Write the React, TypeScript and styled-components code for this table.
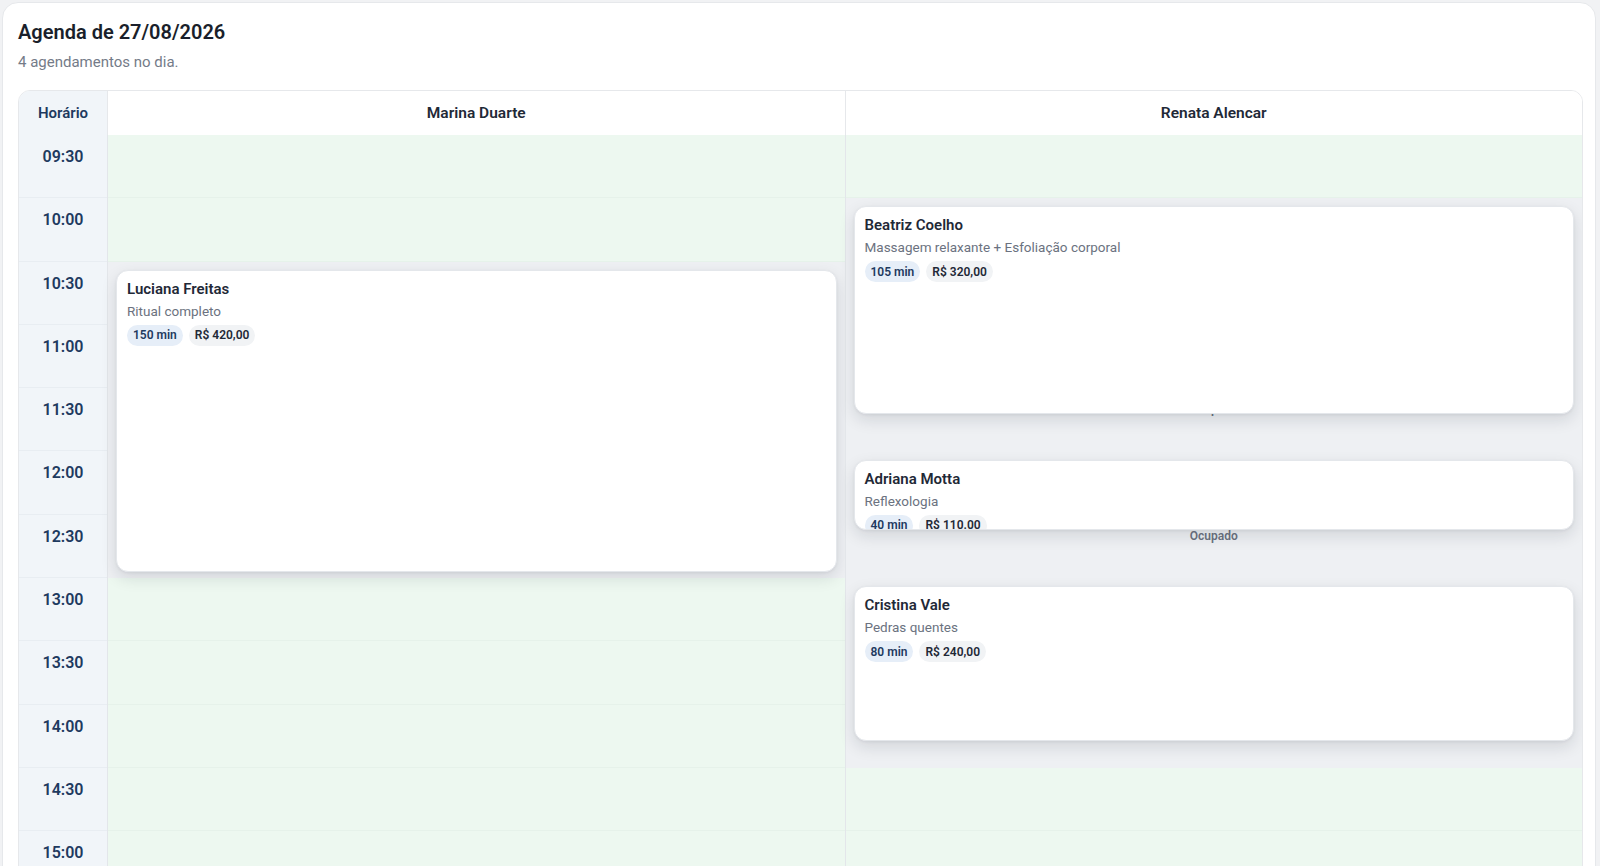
import React from "react";
import styled, { createGlobalStyle } from "styled-components";

const SLOT = 63.3;
const FONT = `Roboto, "Noto Sans", "Liberation Sans", sans-serif`;

const Global = createGlobalStyle`
  html, body { margin: 0; padding: 0; background: #f1f2f4; }
  body { font-family: ${FONT}; color: #1f2937; }
  * { box-sizing: border-box; }
`;

const Page = styled.div`
  padding: 2px 4px 0 2px;
`;

const Panel = styled.section`
  background: #ffffff;
  border: 1px solid #e6e8eb;
  border-radius: 16px;
  padding: 15px 12px 24px 15px;
`;

const Title = styled.h1`
  margin: 0;
  font-size: 20px;
  line-height: 28px;
  font-weight: 600;
  color: #1a1f2b;
  letter-spacing: 0;
`;

const Subtitle = styled.p`
  margin: 6px 0 0;
  font-size: 15px;
  line-height: 20px;
  color: #747b88;
`;

const Table = styled.div`
  margin-top: 18px;
  border: 1px solid #e6e8eb;
  border-radius: 12px;
  overflow: hidden;
  display: grid;
  grid-template-columns: 88px 1fr 1fr;
`;

const HeadCell = styled.div<{ $time?: boolean }>`
  height: 44px;
  display: flex;
  align-items: center;
  justify-content: center;
  font-size: ${(p) => (p.$time ? "15px" : "15.5px")};
  font-weight: 600;
  color: ${(p) => (p.$time ? "#1e3a5f" : "#1f2937")};
  background: ${(p) => (p.$time ? "#f1f5f9" : "#ffffff")};
  border-left: ${(p) => (p.$time ? "none" : "1px solid #e6e8eb")};
`;

const TimeColumn = styled.div`
  background: #f1f5f9;
  display: flex;
  flex-direction: column;
`;

const TimeCell = styled.div`
  height: ${SLOT}px;
  padding-top: 12px;
  text-align: center;
  font-size: 16px;
  line-height: 20px;
  font-weight: 600;
  color: #1e3a5f;
  border-bottom: 1px solid #e8edf2;
`;

const ResourceColumn = styled.div`
  position: relative;
  display: flex;
  flex-direction: column;
  border-left: 1px solid #e3e6ea;
`;

const Slot = styled.div<{ $busy?: boolean }>`
  height: ${SLOT}px;
  flex: none;
  background: ${(p) => (p.$busy ? "#eef0f3" : "#edf8f0")};
  border-bottom: 1px solid ${(p) => (p.$busy ? "#eef0f3" : "#e6f2ea")};
  display: flex;
  justify-content: center;
  padding-top: 14px;
`;

const BusyLabel = styled.span`
  font-size: 12px;
  line-height: 14px;
  font-weight: 600;
  color: #6b7280;
`;

const Appointment = styled.article`
  position: absolute;
  left: 8px;
  right: 8px;
  background: #ffffff;
  border: 1px solid #e4e7eb;
  border-radius: 12px;
  box-shadow: 0 6px 16px rgba(15, 23, 42, 0.12), 0 1px 3px rgba(15, 23, 42, 0.06);
  padding: 8px 10px;
  overflow: hidden;
  display: flex;
  flex-direction: column;
  align-items: flex-start;
`;

const ClientName = styled.div`
  font-size: 15px;
  line-height: 20px;
  font-weight: 600;
  color: #1f2937;
`;

const Service = styled.div`
  margin-top: 3px;
  font-size: 13.5px;
  line-height: 18px;
  color: #6b7280;
`;

const Chips = styled.div`
  margin-top: 5px;
  display: flex;
  gap: 6px;
`;

const Chip = styled.span<{ $tone: "blue" | "grey" }>`
  height: 21px;
  display: inline-flex;
  align-items: center;
  padding: 0 6px;
  border-radius: 999px;
  font-size: 12px;
  font-weight: 600;
  background: ${(p) => (p.$tone === "blue" ? "#e6eef8" : "#f1f3f5")};
  color: ${(p) => (p.$tone === "blue" ? "#1e3a5f" : "#1f2937")};
`;

const times = [
  "09:30", "10:00", "10:30", "11:00", "11:30", "12:00", "12:30",
  "13:00", "13:30", "14:00", "14:30", "15:00", "15:30", "16:00",
];

type Appt = {
  name: string;
  service: string;
  start: string;
  minutes: number;
  price: string;
};

type Resource = { name: string; appts: Appt[] };

const resources: Resource[] = [
  {
    name: "Marina Duarte",
    appts: [
      { name: "Luciana Freitas", service: "Ritual completo", start: "10:30", minutes: 150, price: "R$ 420,00" },
    ],
  },
  {
    name: "Renata Alencar",
    appts: [
      { name: "Beatriz Coelho", service: "Massagem relaxante + Esfoliação corporal", start: "10:00", minutes: 105, price: "R$ 320,00" },
      { name: "Adriana Motta", service: "Reflexologia", start: "12:00", minutes: 40, price: "R$ 110.00" },
      { name: "Cristina Vale", service: "Pedras quentes", start: "13:00", minutes: 80, price: "R$ 240,00" },
    ],
  },
];

const toMin = (t: string) => {
  const [h, m] = t.split(":").map(Number);
  return h * 60 + m;
};
const BASE = toMin("09:30");

function isBusy(r: Resource, t: string) {
  const s = toMin(t);
  return r.appts.some((a) => {
    const st = toMin(a.start);
    return s + 30 > st && s < st + a.minutes;
  });
}

export default function App() {
  return (
    <Page>
      <Global />
      <Panel>
        <Title>Agenda de 27/08/2026</Title>
        <Subtitle>4 agendamentos no dia.</Subtitle>
        <Table>
          <HeadCell $time>Horário</HeadCell>
          {resources.map((r) => (
            <HeadCell key={r.name}>{r.name}</HeadCell>
          ))}
          <TimeColumn>
            {times.map((t) => (
              <TimeCell key={t}>{t}</TimeCell>
            ))}
          </TimeColumn>
          {resources.map((r) => (
            <ResourceColumn key={r.name}>
              {times.map((t) => {
                const busy = isBusy(r, t);
                return (
                  <Slot key={t} $busy={busy}>
                    {busy && <BusyLabel>Ocupado</BusyLabel>}
                  </Slot>
                );
              })}
              {r.appts.map((a) => (
                <Appointment
                  key={a.name}
                  style={{
                    top: ((toMin(a.start) - BASE) / 30) * SLOT + 8,
                    height: (a.minutes / 30) * SLOT - 14,
                  }}
                >
                  <ClientName>{a.name}</ClientName>
                  <Service>{a.service}</Service>
                  <Chips>
                    <Chip $tone="blue">{a.minutes} min</Chip>
                    <Chip $tone="grey">{a.price}</Chip>
                  </Chips>
                </Appointment>
              ))}
            </ResourceColumn>
          ))}
        </Table>
      </Panel>
    </Page>
  );
}
